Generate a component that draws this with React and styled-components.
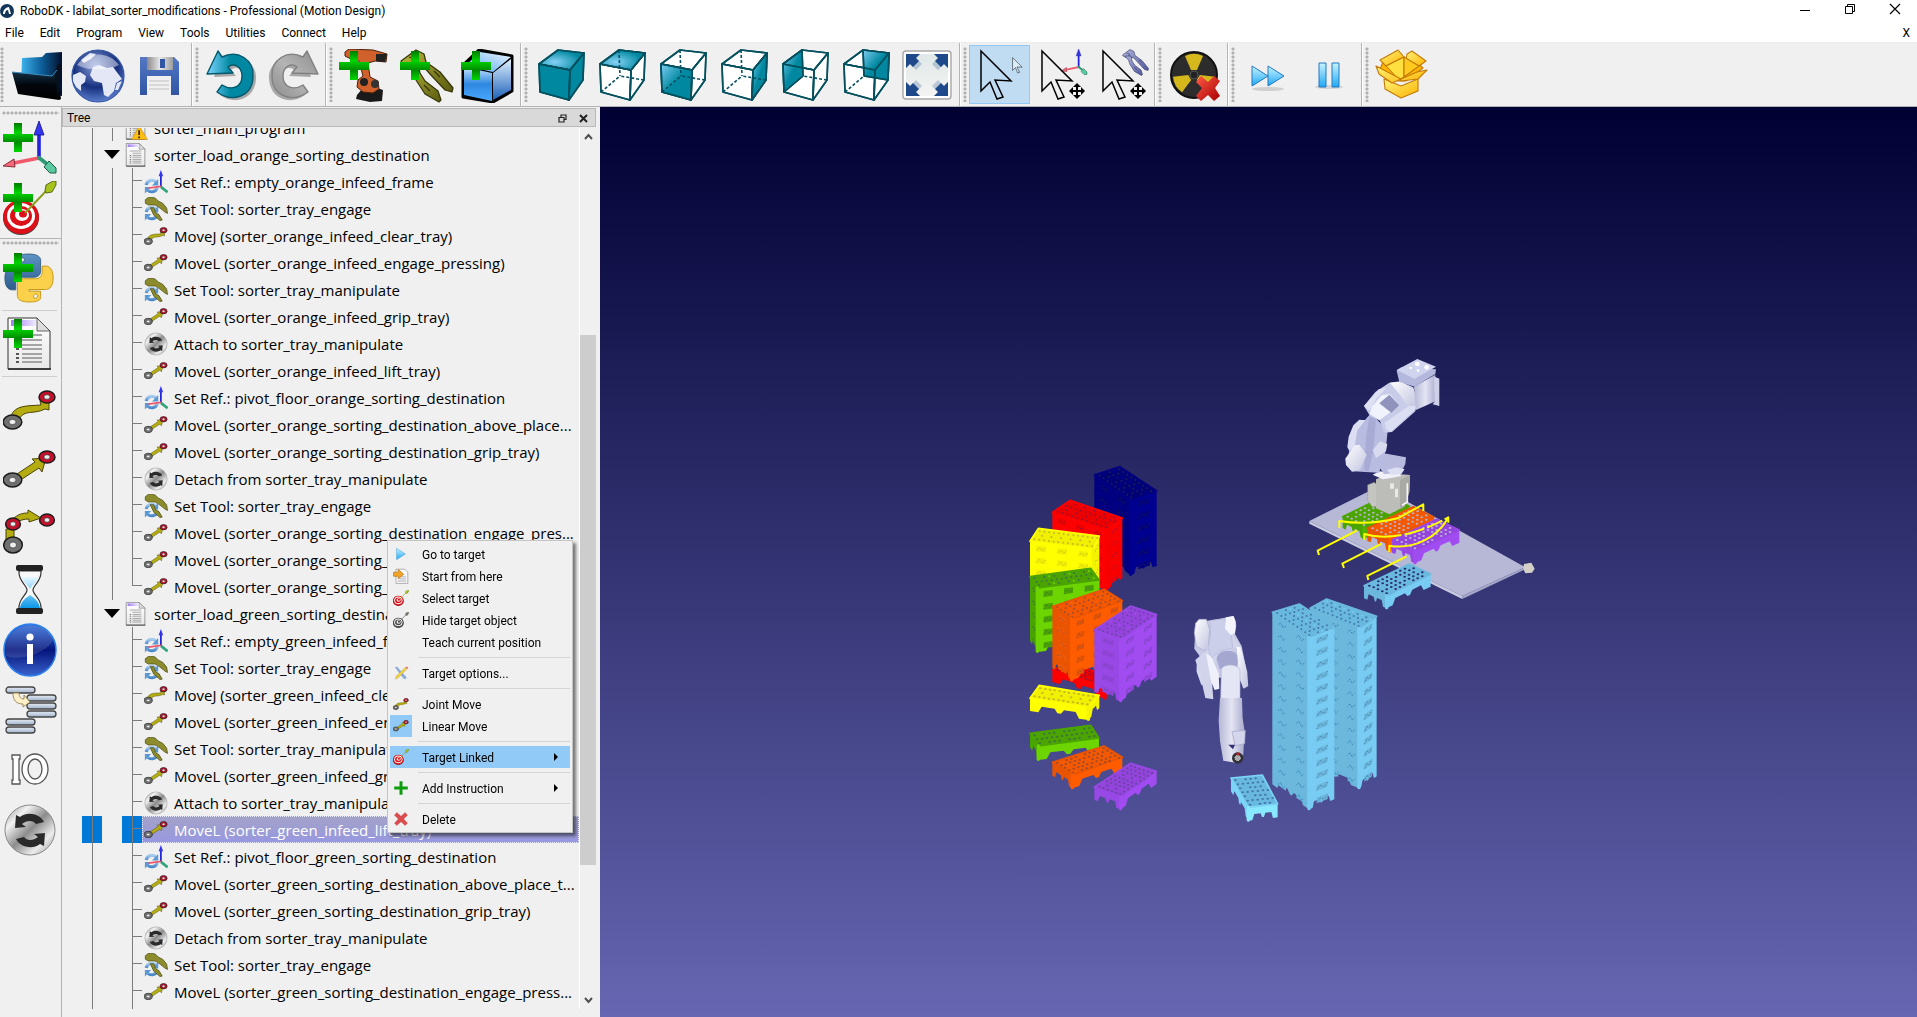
import React from "react";
import styled, { createGlobalStyle, css } from "styled-components";

const GlobalStyle = createGlobalStyle`
  * {
    box-sizing: border-box;
  }

  body {
    margin: 0;
    overflow: hidden;
    font-family: Roboto, "Noto Sans", sans-serif;
    font-size: 12px;
    color: #000;
    background: #f0f0f0;
  }

  button {
    padding: 0;
    border: none;
    background: transparent;
    font: inherit;
    color: inherit;
  }

  ul {
    margin: 0;
    padding: 0;
    list-style: none;
  }

  svg {
    display: block;
    flex-shrink: 0;
  }
`;

/* ---------- shared gradients ---------- */

function Gradients() {
  const linear = (id, stops, dir = [0, 0, 0, 1]) => (
    <linearGradient id={id} x1={dir[0]} y1={dir[1]} x2={dir[2]} y2={dir[3]}>
      {stops.map((s, i) => (
        <stop key={i} offset={i / (stops.length - 1)} stopColor={s} />
      ))}
    </linearGradient>
  );

  return (
    <HiddenDefs aria-hidden="true">
      <defs>
        {linear("plus", ["#007a00", "#00d400", "#008a00", "#00d800"])}
        {linear("folderBack", ["#3fb4ec", "#0d5f9a", "#04102c"], [0, 0, 1, 0])}
        {linear("folderFront", ["#16364c", "#02060c", "#000"])}
        {linear("floppy", ["#5478c4", "#2f55a4"])}
        {linear("silver", ["#8a8a8a", "#e8e8e8", "#9c9c9c"], [0, 0, 1, 0])}
        {linear("undo", ["#7fd6ff", "#0088a2", "#0088a2"], [0, 0, 1, 0])}
        {linear("redo", ["#8d8d8d", "#b4b4b4", "#8d8d8d"], [0, 0, 1, 1])}
        {linear("cubeTop", ["#eef6ff", "#4ca4f4"], [1, 0, 0, 1])}
        {linear("cubeFront", ["#c8e4ff", "#2f88e0", "#4aa8ff"])}
        {linear("cubeSide", ["#dff0ff", "#1c60b8"])}
        {linear("teal", ["#7ecdf2", "#0088a0", "#0088a0"], [0, 0, 1, 1])}
        {linear("blueBtn", ["#c8f4ff", "#1fa8f4"])}
        {linear("gold", ["#fff27a", "#ffb400"], [0, 0, 1, 1])}
        {linear("redX", ["#ff5a48", "#a80000"], [0, 0, 1, 1])}
        {linear("metal", ["#8c8c8c", "#f2f2f2", "#8c8c8c", "#ececec", "#909090"], [0, 0, 1, 1])}
        {linear("info", ["#3470dc", "#04157c", "#3a62cc"])}
        {linear("water", ["#e8f8ff", "#0a98ea"])}
        {linear("paper", ["#ffffff", "#e8e8e8"])}
        {linear("paperHead", ["#a07cf0", "#f0eaff"], [0, 0, 1, 0])}
        {linear("pyBlue", ["#5c94c4", "#2c5c8c"])}
        {linear("slab", ["#e4ecf6", "#a2b2ca"])}
        {linear("grip", ["#b8b83c", "#5a5a10"], [0, 0, 1, 1])}
        {linear("gripBlue", ["#b0b4dc", "#50589c"], [0, 0, 1, 1])}
        {linear("fitBox", ["#dfe8e8", "#f4f4f2"])}
        {linear("reload", ["#a8ccf0", "#4a88c8"])}
        {linear("robotA", ["#ffffff", "#c2c4e0"], [0, 0, 1, 1])}
        {linear("robotB", ["#b6b8d4", "#e4e4f4", "#a8aacb"], [0, 0, 1, 0])}
        <radialGradient id="globe" cx="0.45" cy="0.3" r="0.7">
          <stop offset="0" stopColor="#8fa2dc" />
          <stop offset="0.6" stopColor="#16307e" />
          <stop offset="1" stopColor="#5a7ccc" />
        </radialGradient>
        <radialGradient id="tealGlow" cx="0.35" cy="0.6" r="0.6">
          <stop offset="0" stopColor="#86d2f6" />
          <stop offset="1" stopColor="#0088a0" />
        </radialGradient>
      </defs>
    </HiddenDefs>
  );
}

const HiddenDefs = styled.svg`
  position: absolute;
  width: 0;
  height: 0;
`;

/* ---------- icons, all on a 54 grid ---------- */

function Icon({ size = 54, box = "0 0 54 54", children }) {
  return (
    <svg width={size} height={size} viewBox={box} aria-hidden="true">
      {children}
    </svg>
  );
}

const Plus = () => (
  <path d="M11 2h8v11h11v8H19v10h-8V21H0v-8h11z" fill="url(#plus)" />
);

const Arrows3 = () => (
  <g>
    <path d="M36 38V12" stroke="#2222dd" strokeWidth="3.6" />
    <path d="M36 0l5 14H31z" fill="#3636f0" stroke="#111180" strokeWidth="0.8" />
    <path d="M36 37L11 42" stroke="#f0586c" strokeWidth="3.6" />
    <path d="M0 45l11-7 1 8z" fill="#f4697c" stroke="#80202c" strokeWidth="0.9" />
    <path d="M35 36l9 7" stroke="#2c9a74" strokeWidth="4" />
    <path d="M41 46l5-6 7 7v5l-6 0z" fill="#5ccaa0" stroke="#1c5c44" strokeWidth="1" />
  </g>
);

const Gripper = ({ fill = "url(#grip)", stroke = "#34340a" }) => (
  <g fill={fill} stroke={stroke} strokeWidth="1.2" strokeLinejoin="round">
    <path d="M1 12L16 1l8 4 2 8 14 10 13 16-1 4-7-2-15-16-6-7-8-2-6 2-8-4z" />
    <path d="M6 14l12 0 2 10 5 8 13 10 3 9-2 2-14-8-9-14-3-9z" />
    <path d="M9 8l6 2-2 4M34 22l6 6M24 36l6 6" fill="none" />
  </g>
);

const Donut = ({ x, y, color, rx = 8, ry = 6 }) => (
  <g>
    <ellipse cx={x} cy={y} rx={rx} ry={ry} fill={color} stroke="#1c1c1c" strokeWidth="1.5" />
    <ellipse cx={x} cy={y} rx={rx * 0.38} ry={ry * 0.38} fill="#eee" stroke="#333" strokeWidth="0.7" />
  </g>
);

const grey = "#707070";
const red = "#c4102a";

const MoveJ = () => (
  <g>
    <path
      d="M8 33C12 22 24 23 38 22l-1-4 9-4 0 13-4-1C30 32 22 26 16 36z"
      fill="#b4ac10"
      stroke="#4a4608"
      strokeWidth="1"
    />
    <Donut x={9.5} y={39} color={grey} rx={9.3} ry={7} />
    <Donut x={44} y={14} color={red} />
  </g>
);

const MoveL = () => (
  <g>
    <path
      d="M14 31L32 19l-3-3 14-1-4 14-3-4-17 11z"
      fill="#b4ac10"
      stroke="#4a4608"
      strokeWidth="1"
    />
    <Donut x={9.5} y={37} color={grey} rx={9.3} ry={7} />
    <Donut x={44} y={14} color={red} />
  </g>
);

const MoveC = () => (
  <g>
    <path
      d="M3 40V26h8v14zM10 16c5-5 10-6 15-6l0-3 13 8-12 4 0-3c-5 0-9 1-13 4z"
      fill="#b4ac10"
      stroke="#4a4608"
      strokeWidth="1"
    />
    <Donut x={10} y={42} color={grey} rx={9.3} ry={8} />
    <Donut x={10} y={21} color={red} rx={7.4} />
    <Donut x={44} y={17} color={red} rx={7.4} />
  </g>
);

const Bullseye = ({ color = "#dc1018" }) => (
  <g>
    <ellipse cx="18" cy="37" rx="18" ry="17" fill="#444" />
    <ellipse cx="18" cy="36" rx="18" ry="17" fill={color} />
    <ellipse cx="18" cy="35" rx="14" ry="13" fill="#fff" />
    <ellipse cx="18" cy="35" rx="11" ry="10" fill={color} />
    <ellipse cx="19" cy="34" rx="7" ry="6" fill="#fff" />
    <ellipse cx="20" cy="33" rx="4" ry="3.5" fill={color} />
    <path d="M22 32L45 8" stroke={color === "#dc1018" ? "#8aa01c" : "#555"} strokeWidth="2" />
    <path
      d="M42 10l1-6 7-4h3l0 4-4 7-6 1z"
      fill={color === "#dc1018" ? "#a4c41c" : "#777"}
      stroke="#3c4a08"
      strokeWidth="0.8"
    />
  </g>
);

const Reload = () => (
  <g fill="none" stroke="url(#reload)" strokeWidth="7">
    <path d="M5 34a13 13 0 0 1 22-7" />
    <path d="M30 38a13 13 0 0 1-22 7" />
    <path d="M32 20v15H18zM2 53V38h14z" fill="#5c98d4" stroke="none" />
  </g>
);

const Page = () => (
  <g>
    <path d="M5 1h29l13 13v38H5z" fill="url(#paper)" stroke="#333" strokeWidth="1" />
    <path d="M34 1v13h13z" fill="#ddd" stroke="#444" strokeWidth="0.8" />
    <path d="M8 3h25v6H8z" fill="url(#paperHead)" />
    <path d="M13 18h26M19 23h20M19 28h20M19 32h20M19 37h20M19 41h20M19 45h20" stroke="#8c8c8c" strokeWidth="1.6" />
    <path d="M13 28h3M13 32h3M13 37h3M13 41h3M13 45h3" stroke="#555" strokeWidth="1.8" />
    <path d="M5 52h43" stroke="#222" strokeWidth="1.6" />
  </g>
);

const Sync = () => (
  <g>
    <circle cx="27" cy="27" r="25" fill="url(#metal)" stroke="#8a8a8a" strokeWidth="1" />
    <path d="M13 12l-1 13 11-1-4-3c5-4 11-4 14 0l8-2C37 11 25 8 17 14z" fill="#2a2a2a" />
    <path d="M41 43l1-13-11 1 4 3c-5 4-11 4-14 0l-8 2c4 8 16 11 24 5z" fill="#2a2a2a" />
  </g>
);

const PYTHON_HALF =
  "M14.25.18l.9.2.73.26.59.3.45.32.34.34.25.34.16.33.1.3.04.26.02.2-.01.13V8.5l-.05.63-.13.55-.21.46-.26.38-.3.31-.33.25-.35.19-.35.14-.33.1-.3.07-.26.04-.21.02H8.77l-.69.05-.59.14-.5.22-.41.27-.33.32-.27.35-.2.36-.15.37-.1.35-.07.32-.04.27-.02.21v3.06H3.17l-.21-.03-.28-.07-.32-.12-.35-.18-.36-.26-.36-.36-.35-.46-.32-.59-.28-.73-.21-.88-.14-1.05-.05-1.23.06-1.22.16-1.04.24-.87.32-.71.36-.57.4-.44.42-.33.42-.24.4-.16.36-.1.32-.05.24-.01h.16l.06.01h8.16v-.83H6.18l-.01-2.75-.02-.37.05-.34.11-.31.17-.28.25-.26.31-.23.38-.2.44-.18.51-.15.58-.12.64-.1.71-.06.77-.04.84-.02 1.27.05zm-6.3 1.98l-.23.33-.08.41.08.41.23.34.33.22.41.09.41-.09.33-.22.23-.34.08-.41-.08-.41-.23-.33-.33-.22-.41-.09-.41.09z";

const Python = () => (
  <g transform="translate(2 3) scale(2)">
    <path d={PYTHON_HALF} fill="url(#pyBlue)" stroke="#2c5478" strokeWidth="0.4" />
    <path d={PYTHON_HALF} transform="rotate(180 12 12)" fill="#fbd04a" stroke="#c49a1c" strokeWidth="0.5" />
  </g>
);

const Pointer = ({ fill = "none" }) => (
  <path
    d="M8 2l30 30-16-1 8 17-6 2-7-17-9 9z"
    fill={fill}
    stroke="#000"
    strokeWidth="1.5"
  />
);

const MoveCross = () => (
  <g transform="translate(43 42)">
    <path d="M-6 0H6M0-6V6" stroke="#000" strokeWidth="2" />
    <path d="M0-8l4 4h-8zM0 8l4-4h-8zM-8 0l4 4v-8zM8 0l-4 4v-8z" fill="#000" />
  </g>
);

const TurnArrow = ({ fill, stroke }) => (
  <g>
    <path
      d="M16 11C36 3 52 14 51 30 50 50 30 57 15 46l5-8C30 45 40 41 40 30 40 21 32 16 26 21l5 6-22 1z"
      fill="#8a8a8a"
      opacity="0.7"
    />
    <path
      d="M13 2l4 6C33 0 49 11 48 27 48 48 27 54 12 43l5-7C27 42 37 38 37 27 37 18 29 13 23 18l5 6-26 1z"
      fill={fill}
      stroke={stroke}
      strokeWidth="1.4"
      strokeLinejoin="round"
    />
  </g>
);

const CUBE = {
  A: "5 15",
  B: "24 1",
  C: "50 4",
  D: "36 21",
  E: "6 43",
  F: "35 51",
  G: "49 31",
  H: "25 27",
};

const FACES = {
  top: "ABCD",
  front: "ADFE",
  right: "DCGF",
  left: "ABHE",
  back: "BCGH",
};

const face = (name) => "M" + FACES[name].split("").map((k) => CUBE[k]).join("L") + "z";

function ViewCube({ side }) {
  const hidden = side === "iso" ? [] : ["BH", "EH", "GH"];
  const solid = { left: ["BH", "EH"], back: ["BH", "GH"] }[side] || [];
  const stroke = "#04505e";

  return (
    <g stroke={stroke} strokeWidth="1.6" strokeLinejoin="round">
      {["top", "front", "right"].map((f) => (
        <path key={f} d={face(f)} fill={side === "iso" ? (f === "top" ? "url(#tealGlow)" : "#0088a0") : "#fff"} />
      ))}
      {side !== "iso" && <path d={face(side)} fill={side === "top" ? "url(#tealGlow)" : "url(#teal)"} />}
      {hidden.map((e) => (
        <path
          key={e}
          d={`M${CUBE[e[0]]}L${CUBE[e[1]]}`}
          strokeDasharray={solid.includes(e) ? "none" : "3 2"}
        />
      ))}
      {["top", "front", "right"].map((f) => (
        <path key={f} d={face(f)} fill="none" />
      ))}
    </g>
  );
}

const ICONS = {
  open: (
    <g>
      <path d="M12 9l20-1 4-4 16-1v44L11 41z" fill="url(#folderBack)" />
      <path d="M2 23l40 4 5-6 4 29-2 1L8 45z" fill="url(#folderFront)" />
      <path d="M47 16l5-2-4 36-3-24z" fill="#06101e" />
      <path d="M2 23l40 4 5-6" fill="none" stroke="#3c8cc0" strokeWidth="1" />
    </g>
  ),
  globe: (
    <g>
      <circle cx="27" cy="27" r="26" fill="url(#globe)" stroke="#3456a4" strokeWidth="1.2" />
      <path
        d="M22 18l6-2 8 3 6-1 3 4 6 8-6 4-2 8-6 6-4-2-2-12-8-2-4-6zM2 26l7-3 6 4-1 6-4 3 0 6-5-4-3-6zM10 11l9-7 6 1-5 5-7 4zM46 34l5-2-4 9-3 0z"
        fill="#e4e8f6"
      />
      <path d="M6 16C16 2 38 2 48 16 36 22 18 22 6 16z" fill="#fff" opacity="0.45" />
    </g>
  ),
  save: (
    <g>
      <path d="M8 8h34l5 5v33H8z" fill="url(#floppy)" />
      <path d="M15 8h26v13H15z" fill="url(#silver)" />
      <path d="M28 10h5v9h-5z" fill="#2f55a4" />
      <path d="M15 27h24v19H15z" fill="#f0f0f0" />
      <path d="M17 32h20M17 36h20M17 40h20" stroke="#c0c0c0" />
    </g>
  ),
  undo: <TurnArrow fill="url(#undo)" stroke="#04586c" />,
  redo: (
    <g transform="translate(54 0) scale(-1 1)">
      <TurnArrow fill="url(#redo)" stroke="#808080" />
    </g>
  ),
  robot: (
    <g>
      <path d="M18 46l6-7h14l6 2-1 11-12 1-14-3z" fill="#1a1a1a" />
      <path
        d="M6 3l4-3 24 1 14 4-1 8-11-1-7 2 2 14 8 4 1 8-6 4-10-1-6-5 1-7 5-4-4-15-8-2-6-3z"
        fill="#d0602c"
        stroke="#4c2008"
        strokeWidth="1"
      />
      <path d="M37 5h11l-2 8-9-1z" fill="#222" />
      <circle cx="25" cy="33" r="4" fill="#222" />
      <circle cx="36" cy="35" r="4" fill="#333" />
      <Plus />
    </g>
  ),
  gripper: (
    <g>
      <Gripper />
      <Plus />
    </g>
  ),
  object: (
    <g>
      <path d="M2 16L18 1l33 6v35L32 53 2 48z" fill="#000" stroke="#000" strokeWidth="3" strokeLinejoin="round" />
      <path d="M4 17L19 3l31 5-18 15z" fill="url(#cubeTop)" />
      <path d="M3 18l28 6v28L3 46z" fill="url(#cubeFront)" />
      <path d="M32 24L50 10v31L32 51z" fill="url(#cubeSide)" />
      <Plus />
    </g>
  ),
  iso: <ViewCube side="iso" />,
  top: <ViewCube side="top" />,
  front: <ViewCube side="front" />,
  right: <ViewCube side="right" />,
  left: <ViewCube side="left" />,
  back: <ViewCube side="back" />,
  fit: (
    <g>
      <rect x="3" y="2" width="48" height="48" rx="3" fill="#fff" stroke="#a8a8a8" strokeWidth="1.4" />
      <rect x="6" y="5" width="42" height="42" fill="url(#fitBox)" />
      {[0, 90, 180, 270].map((a) => (
        <g key={a} transform={`rotate(${a} 27 26)`}>
          <path d="M6 5h14l-4 4 6 6-6 6-6-6-4 4z" fill="#1e4a8c" opacity="0.25" />
          <path d="M6 5h14l-4 4 3 3-6 6-3-3-4 4z" fill="#1e4a8c" />
        </g>
      ))}
    </g>
  ),
  select: (
    <g>
      <Pointer />
      <g transform="translate(37 8) scale(0.32)">
        <Pointer fill="#dcecf8" />
      </g>
    </g>
  ),
  moveRef: (
    <g>
      <g transform="translate(27 0) scale(0.49)">
        <Arrows3 />
      </g>
      <Pointer />
      <MoveCross />
    </g>
  ),
  moveTool: (
    <g>
      <Pointer />
      <g transform="translate(27 0) scale(0.5)">
        <Gripper fill="url(#gripBlue)" stroke="#343864" />
      </g>
      <MoveCross />
    </g>
  ),
  collision: (
    <g>
      <circle cx="26" cy="26" r="23" fill="#2c2c2c" stroke="#111" strokeWidth="2" />
      {[0, 120, 240].map((a) => (
        <path key={a} transform={`rotate(${a} 26 26)`} d="M17 7a21 21 0 0 1 18 0L29 21h-6z" fill="#d4b81c" />
      ))}
      <circle cx="26" cy="26" r="4" fill="#222" stroke="#555" />
      <path d="M33 27l7 6 6-6 6 5-5 7 5 8-6 5-6-6-7 6-5-5 6-8-6-6z" fill="url(#redX)" />
    </g>
  ),
  fast: (
    <g>
      <ellipse cx="27" cy="40" rx="16" ry="2" fill="#d0d0d0" />
      <path d="M11 17l16 10-16 10zM27 17l16 10-16 10z" fill="url(#blueBtn)" stroke="#2478c0" strokeWidth="1" />
    </g>
  ),
  pause: (
    <g>
      <ellipse cx="27" cy="38" rx="14" ry="2" fill="#d4d4d4" />
      <path d="M17 14h7v24h-7zM30 14h7v24h-7z" fill="url(#blueBtn)" stroke="#2478c0" strokeWidth="1" />
    </g>
  ),
  box: (
    <g stroke="#c47a08" strokeWidth="1.1" strokeLinejoin="round">
      <path d="M9 30l17 7 17-7v12L26 49 10 40z" fill="url(#gold)" />
      <path d="M8 13l18 17 18-15 4 4-17 13-8 0-18-12z" fill="#ffb400" />
      <path d="M5 11L23 1l6 7L11 17z" fill="url(#gold)" />
      <path d="M32 5l5-3 14 10-7 5-13-7z" fill="url(#gold)" />
      <path d="M11 17l18-9v20l-5 3z" fill="#ffe040" />
      <path d="M29 8l15 9-15 11z" fill="#ffca20" />
      <path d="M1 17l25 13-9 4-13-9zM26 30l16-7 10-2-9 9-17 2z" fill="url(#gold)" />
    </g>
  ),
  addRef: (
    <g>
      <Arrows3 />
      <Plus />
    </g>
  ),
  addTarget: (
    <g>
      <Bullseye />
      <Plus />
    </g>
  ),
  addPython: (
    <g>
      <Python />
      <Plus />
    </g>
  ),
  addProgram: (
    <g>
      <Page />
      <Plus />
    </g>
  ),
  moveJ: <MoveJ />,
  moveL: <MoveL />,
  moveC: <MoveC />,
  wait: (
    <g>
      <path d="M16 8h22c1 10-8 14-8 19s9 9 8 19H16c-1-10 8-14 8-19S15 18 16 8z" fill="#f8f8f8" stroke="#333" strokeWidth="1.2" />
      <path d="M19 14h16c-1 5-6 8-8 12-2-4-7-7-8-12zM17 45c1-7 6-10 10-13 4 3 9 6 10 13z" fill="url(#water)" />
      <rect x="13" y="2" width="27" height="6" rx="2" fill="#222" />
      <rect x="13" y="45" width="27" height="6" rx="2" fill="#222" />
    </g>
  ),
  info: (
    <g>
      <circle cx="27" cy="27" r="26" fill="url(#info)" stroke="#2c80ec" strokeWidth="1.5" />
      <path d="M3 33C14 38 40 32 50 18 46-4 4-4 2 27z" fill="#fff" opacity="0.12" />
      <circle cx="27" cy="14" r="3.6" fill="#fff" />
      <path d="M24 21h6v20h-6z" fill="#fff" />
    </g>
  ),
  call: (
    <g fill="url(#slab)" stroke="#444" strokeWidth="1.3">
      {[
        [3, 4],
        [24, 12],
        [24, 20],
        [24, 28],
        [3, 36],
        [3, 44],
      ].map(([x, y]) => (
        <rect key={x + "-" + y} x={x} y={y} width="29" height="6" rx="3" />
      ))}
      <path d="M10 10h6c0 4 2 6 5 6v-4l6 7-7 5v-3c-7 0-10-4-10-11z" fill="#fff0cc" stroke="#94804c" strokeWidth="0.9" />
    </g>
  ),
  io: (
    <g fill="#fff" stroke="#555" strokeWidth="1.3">
      <path d="M9 12h8v4h-1v21h1v4H9v-4h1V16H9z" />
      <ellipse cx="32" cy="26" rx="13" ry="15" />
      <ellipse cx="32" cy="26" rx="7" ry="10" fill="#f0f0f0" />
    </g>
  ),
  sync: <Sync />,
  program: <Page />,
  programWarn: (
    <g>
      <Page />
      <path d="M34 22l19 31H17z" fill="#fcbc14" stroke="#b07808" />
      <path d="M34 32v11M34 46v4" stroke="#222" strokeWidth="3.6" />
    </g>
  ),
  ref: (
    <g>
      <Reload />
      <path d="M38 38V10" stroke="#2424d8" strokeWidth="4" />
      <path d="M38 0l5 14H33z" fill="#3434f0" />
      <path d="M38 37L10 41" stroke="#f05a6c" strokeWidth="4" />
      <path d="M38 38l15 12" stroke="#34a47c" strokeWidth="6" />
    </g>
  ),
  tool: (
    <g fill="#8c8c2c" stroke="#44440c" strokeWidth="1.5">
      <path d="M3 6l8-6 14 2 7 7 10 5 9 11 2 12-6-3-11-9-11-7-15 0-7-4z" />
      <Reload />
      <path d="M14 24l8 0 4 11 8 5 7 12-5 1-14-12z" />
    </g>
  ),
  go: <path d="M12 8l30 19-30 19z" fill="url(#blueBtn)" stroke="#58a8dc" strokeWidth="2" />,
  start: (
    <g>
      <path d="M10 4h30l10 10v38H10z" fill="#f6f6fa" stroke="#888" strokeWidth="2" />
      <path d="M26 30h18M22 37h22M16 44h28" stroke="#a8a8b4" strokeWidth="3" />
      <path d="M2 14h16V5l18 16-18 16V28H2z" fill="#f4a424" stroke="#a46408" strokeWidth="2" />
    </g>
  ),
  target: <Bullseye />,
  targetHide: <Bullseye color="#4a4a4a" />,
  options: (
    <g>
      <path d="M6 8l8-2 32 36-4 6-6-2z" fill="#8cacd8" />
      <path d="M8 48l3-11L42 8l6 5-30 30z" fill="#f0d048" stroke="#a08824" />
      <path d="M42 8l5-3 5 5-4 3z" fill="#e46474" />
    </g>
  ),
  add: <path d="M22 4h10v18h18v10H32v18H22V32H4V22h18z" fill="#0c9c0c" />,
  remove: <path d="M13 5l14 13L41 5l8 9-13 13 13 14-8 8-14-13-14 13-8-8 13-14L5 14z" fill="#dc4c4c" stroke="#b43434" />,
};

/* ---------- data ---------- */

const MENUS = ["File", "Edit", "Program", "View", "Tools", "Utilities", "Connect", "Help"];

const TOOL_GROUPS = [
  [["open", "Open"], ["globe", "Open online library"], ["save", "Save"]],
  [["undo", "Undo"], ["redo", "Redo"]],
  [["robot", "Add robot"], ["gripper", "Add tool"], ["object", "Add object"]],
  [
    ["iso", "Isometric view"],
    ["top", "Top view"],
    ["front", "Front view"],
    ["right", "Right view"],
    ["left", "Left view"],
    ["back", "Back view"],
    ["fit", "Fit all"],
  ],
  [["select", "Select"], ["moveRef", "Move reference"], ["moveTool", "Move tool"]],
  [["collision", "Check collisions"]],
  [["fast", "Fast simulation"], ["pause", "Pause"]],
  [["box", "Export simulation"]],
];

const TREE = [
  { type: "program", icon: "programWarn", text: "sorter_main_program" },
  { type: "program", icon: "program", text: "sorter_load_orange_sorting_destination", open: true },
  { icon: "ref", text: "Set Ref.: empty_orange_infeed_frame" },
  { icon: "tool", text: "Set Tool: sorter_tray_engage" },
  { icon: "moveJ", text: "MoveJ (sorter_orange_infeed_clear_tray)" },
  { icon: "moveL", text: "MoveL (sorter_orange_infeed_engage_pressing)" },
  { icon: "tool", text: "Set Tool: sorter_tray_manipulate" },
  { icon: "moveL", text: "MoveL (sorter_orange_infeed_grip_tray)" },
  { icon: "sync", text: "Attach to sorter_tray_manipulate" },
  { icon: "moveL", text: "MoveL (sorter_orange_infeed_lift_tray)" },
  { icon: "ref", text: "Set Ref.: pivot_floor_orange_sorting_destination" },
  { icon: "moveL", text: "MoveL (sorter_orange_sorting_destination_above_place..." },
  { icon: "moveL", text: "MoveL (sorter_orange_sorting_destination_grip_tray)" },
  { icon: "sync", text: "Detach from sorter_tray_manipulate" },
  { icon: "tool", text: "Set Tool: sorter_tray_engage" },
  { icon: "moveL", text: "MoveL (sorter_orange_sorting_destination_engage_pres..." },
  { icon: "moveL", text: "MoveL (sorter_orange_sorting_destination_lift)" },
  { icon: "moveL", text: "MoveL (sorter_orange_sorting_destination_clear)", last: true },
  { type: "program", icon: "program", text: "sorter_load_green_sorting_destination", open: true },
  { icon: "ref", text: "Set Ref.: empty_green_infeed_frame" },
  { icon: "tool", text: "Set Tool: sorter_tray_engage" },
  { icon: "moveJ", text: "MoveJ (sorter_green_infeed_clear_tray)" },
  { icon: "moveL", text: "MoveL (sorter_green_infeed_engage_pressing)" },
  { icon: "tool", text: "Set Tool: sorter_tray_manipulate" },
  { icon: "moveL", text: "MoveL (sorter_green_infeed_grip_tray)" },
  { icon: "sync", text: "Attach to sorter_tray_manipulate" },
  { icon: "moveL", text: "MoveL (sorter_green_infeed_lift_tray)", selected: true },
  { icon: "ref", text: "Set Ref.: pivot_floor_green_sorting_destination" },
  { icon: "moveL", text: "MoveL (sorter_green_sorting_destination_above_place_t..." },
  { icon: "moveL", text: "MoveL (sorter_green_sorting_destination_grip_tray)" },
  { icon: "sync", text: "Detach from sorter_tray_manipulate" },
  { icon: "tool", text: "Set Tool: sorter_tray_engage" },
  { icon: "moveL", text: "MoveL (sorter_green_sorting_destination_engage_press..." },
];

const SECOND_PROGRAM = TREE.findIndex((r) => r.text.startsWith("sorter_load_green"));

const CONTEXT_MENU = [
  { icon: "go", text: "Go to target" },
  { icon: "start", text: "Start from here" },
  { icon: "target", text: "Select target" },
  { icon: "targetHide", text: "Hide target object" },
  { text: "Teach current position" },
  null,
  { icon: "options", text: "Target options..." },
  null,
  { icon: "moveJ", text: "Joint Move" },
  { icon: "moveL", text: "Linear Move", checked: true },
  null,
  { icon: "target", text: "Target Linked", active: true, sub: true },
  null,
  { icon: "add", text: "Add Instruction", sub: true },
  null,
  { icon: "remove", text: "Delete" },
];

/* ---------- 3D view ---------- */

// A stack of crates in parallel projection. l, f, r, b are the left, front,
// right and back corners of the top face, h is the height of the stack.
function Stack({ l, f, r, b, h, levels = 1, color, side, dark, hole }) {
  const at = (p, q, t, drop = 0) => [p[0] + (q[0] - p[0]) * t, p[1] + (q[1] - p[1]) * t + drop];
  const pts = (list) => list.map((p) => p.map(Math.round).join(",")).join(" ");
  const length = (p, q) => Math.hypot(q[0] - p[0], q[1] - p[1]);
  const leg = Math.min(18, h / 2);

  const foot = (p, q) => {
    if (length(p, q) < 60) {
      return [at(p, q, 0, h), at(p, q, 0.28, h), at(p, q, 0.4, h - leg), at(p, q, 0.7, h - leg), at(p, q, 0.8, h), at(p, q, 1, h)];
    }
    return [
      at(p, q, 0, h), at(p, q, 0.14, h), at(p, q, 0.2, h - leg), at(p, q, 0.42, h - leg), at(p, q, 0.47, h - 6),
      at(p, q, 0.53, h - 6), at(p, q, 0.58, h - leg), at(p, q, 0.78, h - leg), at(p, q, 0.84, h), at(p, q, 1, h),
    ];
  };

  const windows = (p, q, fill, spark) => {
    if (levels === 1) return null;
    const wide = length(p, q);
    const n = Math.max(1, Math.round(wide / 60));
    const step = h / levels;
    const out = [];
    for (let i = 0; i < levels; i++) {
      for (let j = 0; j < n; j++) {
        const t0 = (j + 0.3) / n;
        const t1 = (j + 0.74) / n;
        const y = i * step + step * 0.3;
        const tall = step * 0.46;
        out.push(
          <g key={i + "-" + j}>
            <polygon points={pts([at(p, q, t0, y), at(p, q, t1, y), at(p, q, t1, y + tall), at(p, q, t0, y + tall)])} fill={fill} />
            <polyline
              points={pts([at(p, q, t0, y + tall - 2), at(p, q, (t0 * 2 + t1) / 3, y + 4), at(p, q, (t0 + t1 * 2) / 3, y + tall - 3), at(p, q, t1, y + 3)])}
              fill="none"
              stroke={spark}
              strokeWidth="3"
              strokeDasharray={i % 2 ? "4 3 2 3" : "2 3 5 3"}
            />
          </g>
        );
      }
    }
    return out;
  };

  const holes = [];
  const n1 = Math.max(3, Math.round(length(l, f) / 15));
  const n2 = Math.max(3, Math.round(length(l, b) / 15));
  for (let i = 0; i < n1; i++) {
    for (let j = 0; j < n2; j++) {
      const u = (i + 0.6) / (n1 + 0.2);
      const v = (j + 0.6) / (n2 + 0.2);
      const x = l[0] + (f[0] - l[0]) * u + (b[0] - l[0]) * v;
      const y = l[1] + (f[1] - l[1]) * u + (b[1] - l[1]) * v;
      const kind = (i * 2 + j * 3 + ((i * j) % 2)) % 4;
      if (kind === 3) continue;
      holes.push(
        <ellipse
          key={i + "-" + j}
          cx={Math.round(x)}
          cy={Math.round(y)}
          rx={levels === 1 ? 4 : 3}
          ry="3"
          fill={kind === 1 && levels > 1 ? color : hole}
        />
      );
    }
  }

  return (
    <g strokeLinejoin="round">
      <polygon points={pts([l, f, ...foot(l, f).reverse()])} fill={side} />
      <polygon points={pts([f, r, ...foot(f, r).reverse()])} fill={color} />
      <polygon points={pts([l, f, r, b])} fill={dark} stroke={side} strokeWidth="5" />
      {windows(l, f, dark, hole)}
      {windows(f, r, side, hole)}
      {holes}
      <path d={`M${f[0]} ${f[1]}V${f[1] + h - 2}`} stroke={color} strokeWidth="10" strokeLinecap="round" />
    </g>
  );
}

const NAVY = { color: "#000090", side: "#000080", dark: "#000078", hole: "#1c1c58" };
const RED = { color: "#f80000", side: "#ff0000", dark: "#ec0000", hole: "#a01030" };
const YELLOW = { color: "#f4f400", side: "#ffff00", dark: "#f0f000", hole: "#c4b828" };
const GREEN = { color: "#6cd400", side: "#4aa400", dark: "#4ca400", hole: "#3c7440" };
const ORANGE = { color: "#ff5c00", side: "#e85400", dark: "#f45800", hole: "#a04c30" };
const PURPLE = { color: "#a04cf0", side: "#9848e4", dark: "#9444dc", hole: "#6c44a8" };
const CYAN = { color: "#78ccf4", side: "#6cb8dc", dark: "#68b8e0", hole: "#4478a4" };

function Scene() {
  return (
    <Canvas viewBox="600 107 1317 910" preserveAspectRatio="xMidYMid slice" role="img" aria-label="Robot cell">
      <g transform="translate(1010 450) scale(0.3333)">
        <Stack l={[253, 75]} f={[362, 150]} r={[440, 123]} b={[330, 50]} h={225} levels={6} {...NAVY} />
        <Stack l={[127, 187]} f={[290, 240]} r={[337, 204]} b={[180, 151]} h={180} levels={5} {...RED} />
        <Stack l={[60, 274]} f={[250, 297]} r={[268, 258]} b={[85, 235]} h={180} levels={5} {...YELLOW} />
        <Stack l={[60, 380]} f={[82, 414]} r={[267, 390]} b={[242, 355]} h={192} levels={5} {...GREEN} />
        <Stack l={[127, 660]} f={[285, 710]} r={[300, 680]} b={[180, 640]} h={36} {...RED} />
        <Stack l={[127, 470]} f={[185, 507]} r={[337, 452]} b={[282, 418]} h={184} levels={5} {...ORANGE} />
        <Stack l={[253, 540]} f={[332, 568]} r={[440, 494]} b={[362, 468]} h={186} levels={5} {...PURPLE} />
        <Stack l={[60, 745]} f={[235, 772]} r={[268, 736]} b={[88, 706]} h={38} {...YELLOW} />
        <Stack l={[60, 850]} f={[85, 888]} r={[267, 864]} b={[242, 826]} h={42} {...GREEN} />
        <Stack l={[127, 937]} f={[187, 975]} r={[337, 922]} b={[282, 888]} h={40} {...ORANGE} />
        <Stack l={[253, 1012]} f={[332, 1040]} r={[440, 964]} b={[362, 940]} h={38} {...PURPLE} />
        <Stack l={[900, 475]} f={[1047, 535]} r={[1100, 499]} b={[950, 447]} h={480} levels={13} {...CYAN} />
        <Stack l={[787, 487]} f={[897, 562]} r={[973, 532]} b={[868, 462]} h={516} levels={14} {...CYAN} />
        <Stack l={[663, 984]} f={[715, 1072]} r={[803, 1062]} b={[757, 975]} h={40} {...CYAN} color="#88e8ff" side="#7cd4f8" />

        <path d="M557 520l22-12 14 4 50-8 28-6 8 28-4 26 20 36 12 60 8 60-16 6-10-40-80 12-20-40-36-50z" fill="#c8cae6" />
        <path d="M557 520l10-12 22 0 10 30-4 60-14 4-22-14-6-40z" fill="url(#robotA)" stroke="#a8a8c8" strokeWidth="2" />
        <path d="M560 645l14 6 18 36 4 14-22 4-14-40z" fill="#d8daf0" />
        <path d="M590 600l30-60 20-36 32-4 6 30-10 28 22 30-66 30-20 50 6 80-24-4-16-70-14-44z" fill="#d2d4ec" />
        <path d="M600 512l44-6 20 48 4 40-40 10-24 20-10-30 8-40z" fill="#cccfea" stroke="#b4b6d6" strokeWidth="2" />
        <path d="M648 502l22-4 7 16-2 34-12 8-18-20z" fill="#f4f4fc" />
        <path d="M620 628c0-34 66-34 66 0l-6 24-50 6z" fill="#a4a8d0" />
        <path d="M680 590l12 2 20 74 2 42-12 8-14-30z" fill="url(#robotA)" />
        <path d="M588 610l16 10 22 50 2 46-14 4-10-24z" fill="#f0f0fa" />
        <path d="M634 660c2-20 50-20 56 0l0 84-58 10z" fill="#e4e6f6" stroke="#b0b2d2" strokeWidth="2" />
        <path d="M630 744l66 0 2 60 6 40-4 70-22 24-38-6-10-60-4-60z" fill="url(#robotB)" />
        <path d="M666 845l40-4-2 40-28 6z" fill="#d4d6ee" stroke="#a0a2c4" strokeWidth="2" />
        <path d="M655 884l20 0-6 14z" fill="#303078" />
        <circle cx="683" cy="924" r="17" fill="#303038" />
        <circle cx="683" cy="924" r="8" fill="#a8a8ac" stroke="#e8e8e8" strokeWidth="3" strokeDasharray="4 4" />
        <path d="M680 908h8v8h-8z" fill="#c02020" />
      </g>

      <g transform="translate(1290 340) scale(0.3333)">
        <path d="M58 543L268 438 706 682 517 768z" fill="#b6b8d6" />
        <path d="M58 543L517 768v9L58 551z" fill="#c8cadf" />
        <path d="M517 768L706 682v6L517 777z" fill="#a4a6c8" />
        <path d="M702 672l22-4 10 18-8 12-20 2-6-14z" fill="#d4d0c8" />
        <Stack l={[158, 530]} f={[222, 563]} r={[358, 499]} b={[290, 466]} h={34} {...GREEN} color="#50b400" hole="#b0b4c8" />
        <Stack l={[232, 565]} f={[300, 597]} r={[432, 532]} b={[370, 500]} h={38} {...ORANGE} hole="#b8b0c8" />
        <Stack l={[306, 600]} f={[375, 632]} r={[508, 570]} b={[440, 538]} h={38} {...PURPLE} hole="#b8b0d8" />
        <Stack l={[222, 737]} f={[290, 767]} r={[422, 702]} b={[358, 672]} h={38} {...CYAN} hole="#2c2c6c" />

        <g fill="none" stroke="#ffff00" strokeWidth="6" strokeLinejoin="round">
          <path d="M148 563v-20c60 10 110 8 175-8l77-42v20" />
          <path d="M223 600v-18c60 18 150 8 252-50v16" strokeDasharray="130 10 1 0 60 10 50 8" />
          <path d="M298 637v-20c70 12 140-20 177-84" />
          <path d="M200 572L83 632l4 13M275 611l-118 60 5 13M350 649l-118 59 3 12" />
        </g>

        <path d="M233 435l20-8 20 20 4 50-30 4-14-20z" fill="#c4c4c0" stroke="#8c8c90" strokeWidth="2" strokeDasharray="4 3" />
        <path d="M258 418l42-18 60 5-2 50-14 44-46 24-40-18z" fill="#bcbcb8" />
        <path d="M330 420l30-14-2 50-14 44-14 8z" fill="#a8a8a4" />
        <path d="M300 430h12v16h-12zM315 446h9v26h-9z" fill="#e8e8e8" />
        <path d="M352 430l0 56-16 10" fill="none" stroke="#f4f4f4" strokeWidth="5" />
        <path d="M248 404l20-10 60 6 6 8-30 6-26 4z" fill="#f0f0f8" />

        <path d="M282 340l66 12-2 20-14 28-50 2-14-20z" fill="#b8bade" />
        <path d="M290 390l30-8 24 6-10 14-30 2z" fill="#dcdef2" />
        <path d="M207 240l18 0 18-20 50 52-6 60-20 66-80-4-12-40 6-60z" fill="#b8bce0" />
        <path d="M176 290l14-34 18-17 18 2-24 30-8 50-16 12-6-12z" fill="#dcdef4" />
        <path d="M228 290l10-60 20 4-8 100-14 60-14-4z" fill="#a8acd4" />
        <path d="M166 356l28-40 14-2 22 30-20 46-24 5-18-20z" fill="url(#robotA)" />
        <path d="M248 330l22-26 22 8-4 22-30 20z" fill="#d8daf0" />
        <path d="M222 198l34-42 42-28 32-4 40 18 12 40-6 32-70 62-24 2-12-36-30-14z" fill="#c8cce8" />
        <path d="M300 128l34-3 36 22 10 36-26 18-22-34z" fill="url(#robotA)" />
        <path d="M245 200l30-34 24-4 30 34-60 44-30-18z" fill="#f0f2fc" />
        <path d="M268 190l30-26 30 32-24 22z" fill="#9094bc" />
        <path d="M222 198l44-50 24-4-30 30-22 38z" fill="#dee0f4" />
        <path d="M284 248l72-50 18 0 4 8-76 70-14-8z" fill="#dcdff4" />
        <path d="M372 140l64-36 4 78-62 28z" fill="url(#robotB)" />
        <path d="M432 118l2-8 14 6v82l-20-5 6-8z" fill="#ced0e8" />
        <path d="M320 92l14-10 104 6-2 14-62 38-46-14z" fill="#b4b8dc" />
        <path d="M320 90l62-33 56 23-64 36z" fill="#d0d4ee" />
        <g fill="#fff">
          <circle cx="382" cy="72" r="7" />
          <circle cx="362" cy="84" r="4" />
          <circle cx="410" cy="82" r="7" />
          <circle cx="384" cy="92" r="4" />
        </g>
      </g>
    </Canvas>
  );
}

/* ---------- app ---------- */

export default function App() {
  return (
    <Window>
      <GlobalStyle />
      <Gradients />

      <TitleBar>
        <Icon size={14} box="0 0 14 14">
          <circle cx="7" cy="7" r="7" fill="#12365a" />
          <path d="M3 10c0-4 3-7 6-7l2 7-2 0-1-4c-2 0-3 2-3 4z" fill="#fff" />
        </Icon>
        <Title>RoboDK - labilat_sorter_modifications - Professional (Motion Design)</Title>
        <WindowButton aria-label="Minimize">
          <Icon size={12} box="0 0 12 12">
            <path d="M1 7.500h10" stroke="#000" />
          </Icon>
        </WindowButton>
        <WindowButton aria-label="Restore">
          <Icon size={12} box="0 0 12 12">
            <path d="M1.500 3.500h7v7h-7zM3.500 3.500v-2h7v7h-2" fill="none" stroke="#000" />
          </Icon>
        </WindowButton>
        <WindowButton aria-label="Close">
          <Icon size={12} box="0 0 12 12">
            <path d="M1 1l10 10M11 1L1 11" stroke="#000" strokeWidth="1.200" />
          </Icon>
        </WindowButton>
      </TitleBar>

      <MenuBar>
        {MENUS.map((m) => (
          <MenuTitle key={m}>{m}</MenuTitle>
        ))}
        <CloseDocument aria-label="Close station">X</CloseDocument>
      </MenuBar>

      <TopTools>
        {TOOL_GROUPS.map((group, i) => (
          <ToolGroup key={i} $first={i === 0} $last={i === TOOL_GROUPS.length - 1}>
            {group.map(([name, label]) => (
              <ToolButton key={name} aria-label={label} $active={name === "select"}>
                <Icon>{ICONS[name]}</Icon>
              </ToolButton>
            ))}
          </ToolGroup>
        ))}
      </TopTools>

      <Body>
        <SideTools>
          <Grip />
          <SideButton icon="addRef" label="Add reference frame" />
          <SideButton icon="addTarget" label="Add target" />
          <SideRule $full />
          <Grip />
          <SideButton icon="addPython" label="Add Python program" />
          <SideRule />
          <SideButton icon="addProgram" label="Add program" />
          <SideRule />
          <SideButton icon="moveJ" label="Move joint" />
          <SideButton icon="moveL" label="Move linear" />
          <SideButton icon="moveC" label="Move circular" />
          <SideButton icon="wait" label="Pause instruction" />
          <SideButton icon="info" label="Show message" />
          <SideButton icon="call" label="Program call" />
          <SideButton icon="io" label="Set or wait I/O" />
          <SideButton icon="sync" label="Simulation event" />
        </SideTools>

        <Dock>
          <DockTitle>
            <DockName>Tree</DockName>
            <DockButton aria-label="Float panel">
              <Icon size={9} box="0 0 9 9">
                <path d="M1 3.500h5v4.500H1zM3 3.500V1h5v4.500H6" fill="none" stroke="#222" strokeWidth="1.200" />
              </Icon>
            </DockButton>
            <DockButton aria-label="Close panel">
              <Icon size={9} box="0 0 9 9">
                <path d="M1 1l7 7M8 1L1 8" stroke="#222" strokeWidth="2" />
              </Icon>
            </DockButton>
          </DockTitle>
          <TreeArea>
            <TreeList>
              {TREE.map((row, i) => (
                <TreeRow key={i} row={row} inFirst={i < SECOND_PROGRAM} />
              ))}
              <Row>
                <Guide $line />
                <Guide />
                <Guide $line />
              </Row>
            </TreeList>
            <ScrollBar>
              <ScrollButton aria-label="Scroll up">
                <Icon size={9} box="0 0 9 9">
                  <path d="M1 7l3.500-4L8 7" fill="none" stroke="#505050" strokeWidth="2" />
                </Icon>
              </ScrollButton>
              <ScrollTrack>
                <ScrollThumb />
              </ScrollTrack>
              <ScrollButton aria-label="Scroll down">
                <Icon size={9} box="0 0 9 9">
                  <path d="M1 2l3.500 4L8 2" fill="none" stroke="#505050" strokeWidth="2" />
                </Icon>
              </ScrollButton>
            </ScrollBar>
          </TreeArea>
        </Dock>

        <View>
          <Scene />
        </View>
      </Body>

      <ContextMenu role="menu">
        {CONTEXT_MENU.map((item, i) =>
          item ? (
            <ContextItem key={i} role="menuitem" $active={item.active}>
              <ContextIcon $checked={item.checked}>
                {item.icon && <Icon size={16}>{ICONS[item.icon]}</Icon>}
              </ContextIcon>
              <ContextText>{item.text}</ContextText>
              {item.sub && (
                <Icon size={8} box="0 0 8 8">
                  <path d="M2 0l4 4-4 4z" fill="#000" />
                </Icon>
              )}
            </ContextItem>
          ) : (
            <ContextRule key={i} />
          )
        )}
      </ContextMenu>
    </Window>
  );
}

function SideButton({ icon, label }) {
  return (
    <SideToolButton aria-label={label}>
      <Icon>{ICONS[icon]}</Icon>
    </SideToolButton>
  );
}

function TreeRow({ row, inFirst }) {
  if (row.type === "program") {
    return (
      <Row>
        <Guide $line />
        {row.open ? (
          <Guide>
            <Expander aria-label="Collapse">
              <Icon size={16} box="0 0 16 16">
                <path d="M0 3h16L8 12z" fill="#000" />
              </Icon>
            </Expander>
          </Guide>
        ) : (
          <Guide $line />
        )}
        <RowContent>
          <Icon size={24}>{ICONS[row.icon]}</Icon>
          <RowText>{row.text}</RowText>
        </RowContent>
      </Row>
    );
  }

  return (
    <Row>
      <Guide $line $selected={row.selected} />
      <Guide $line={inFirst} />
      <Guide $line $tick $end={row.last} $selected={row.selected} />
      <RowContent $selected={row.selected}>
        <Icon size={24}>{ICONS[row.icon]}</Icon>
        <RowText>{row.text}</RowText>
      </RowContent>
    </Row>
  );
}

const Window = styled.div`
  display: flex;
  flex-direction: column;
  height: 100vh;
  background: #f0f0f0;
`;

const TitleBar = styled.header`
  display: flex;
  flex-shrink: 0;
  height: 22px;
  background: #fff;
  align-items: center;
`;

const Title = styled.h1`
  flex: 1;
  margin: 0 0 0 6px;
  font-size: 12px;
  line-height: 16px;
  font-weight: 400;
`;

const WindowButton = styled.button`
  display: flex;
  align-items: center;
  justify-content: center;
  width: 45px;
  height: 18px;
  align-self: flex-start;
`;

const MenuBar = styled.nav`
  display: flex;
  flex-shrink: 0;
  height: 21px;
  align-items: center;
  gap: 16px;
  padding: 2px 7px 0 5px;
  background: #fff;
  border-bottom: 1px solid #ececec;
`;

const MenuTitle = styled.button`
  line-height: 18px;
`;

const CloseDocument = styled.button`
  margin-left: auto;
  line-height: 18px;
`;

const TopTools = styled.div`
  display: flex;
  flex-shrink: 0;
  height: 64px;
  border-bottom: 1px solid #b4b4b4;
`;

const dots = css`
  background-image: radial-gradient(circle at 2px 2px, #b0b0b0 1px, transparent 2px);
  background-size: 4px 4px;
`;

const ToolGroup = styled.div`
  display: flex;
  align-items: center;
  position: relative;
  padding: 0 2px 0 ${(props) => (props.$first ? "6px" : "8px")};
  border-right: ${(props) => (props.$last ? "none" : "1px solid #b4b4b4")};
  box-shadow: ${(props) => (props.$last ? "none" : "1px 0 0 #fff")};
  margin-right: 1px;

  &::before {
    content: "";
    position: absolute;
    left: ${(props) => (props.$first ? "0" : "2px")};
    top: 4px;
    bottom: 4px;
    width: 4px;
    ${dots}
  }
`;

const ToolButton = styled.button`
  display: flex;
  align-items: center;
  justify-content: center;
  width: 61px;
  height: 59px;
  padding-top: 2px;
  border: 1px solid ${(props) => (props.$active ? "#90c8f6" : "transparent")};
  background: ${(props) => (props.$active ? "#c0dcf3" : "transparent")};
`;

const Body = styled.div`
  display: flex;
  flex: 1;
  min-height: 0;
`;

const SideTools = styled.div`
  display: flex;
  flex-direction: column;
  flex-shrink: 0;
  width: 62px;
  padding-top: 2px;
  border-right: 1px solid #b4b4b4;
  background: #f0f0f0;
`;

const Grip = styled.div`
  height: 4px;
  flex-shrink: 0;
  margin: 2px 2px 3px;
  ${dots}
`;

const SideToolButton = styled.button`
  display: flex;
  align-items: center;
  justify-content: center;
  width: 60px;
  height: 60px;
  flex-shrink: 0;
`;

const SideRule = styled.div`
  height: 1px;
  flex-shrink: 0;
  margin: ${(props) => (props.$full ? "0" : "2px 4px 3px 2px")};
  background: ${(props) => (props.$full ? "#b4b4b4" : "#cfcfcf")};
`;

const Dock = styled.aside`
  display: flex;
  flex-direction: column;
  flex-shrink: 0;
  width: 538px;
  padding: 1px 4px 8px 0;
`;

const DockTitle = styled.div`
  display: flex;
  align-items: center;
  gap: 6px;
  height: 19px;
  flex-shrink: 0;
  padding: 1px 4px 0;
  background: #d9d9d9;
  border: 1px solid #b9b9b9;
`;

const DockName = styled.span`
  flex: 1;
  line-height: 16px;
`;

const DockButton = styled.button`
  display: flex;
  align-items: center;
  justify-content: center;
  width: 15px;
  height: 15px;
`;

const TreeArea = styled.div`
  display: flex;
  flex: 1;
  min-height: 0;
  overflow: hidden;
  padding-top: 1px;
`;

const TreeList = styled.ul`
  flex: 1;
  min-width: 0;
  min-height: 0;
  overflow: hidden;
  padding-left: 20px;
  font-family: "Open Sans", "Noto Sans", sans-serif;
  font-size: 15px;

  & > li:first-child {
    margin-top: -14px;
  }
`;

const Row = styled.li`
  display: flex;
  height: 27px;
`;

const Guide = styled.span`
  flex-shrink: 0;
  width: 20px;
  background-color: ${(props) => (props.$selected ? "#0078d7" : "transparent")};
  background-image: linear-gradient(
      ${(props) => (props.$line ? "#7c7c7c, #7c7c7c" : "transparent, transparent")}
    ),
    linear-gradient(
      ${(props) => (props.$tick ? "#7c7c7c, #7c7c7c" : "transparent, transparent")}
    );
  background-position: 10px 0, 10px 12px;
  background-size: 1px ${(props) => (props.$end ? "13px" : "100%")}, 10px 1px;
  background-repeat: no-repeat;
`;

const Expander = styled.button`
  display: flex;
  align-items: center;
  justify-content: center;
  width: 20px;
  height: 27px;
`;

const RowContent = styled.div`
  display: flex;
  flex: 1;
  align-items: center;
  gap: 6px;
  min-width: 0;
  overflow: hidden;
  padding-left: ${(props) => (props.$selected ? "1px" : "2px")};
  color: ${(props) => (props.$selected ? "#fff" : "#000")};
  border: ${(props) => (props.$selected ? "1px dotted #e8e8ff" : "none")};
  background: ${(props) =>
    props.$selected ? "linear-gradient(#a2a2c8, #9898e0)" : "transparent"};
`;

const RowText = styled.span`
  padding-top: 2px;
  line-height: 23px;
  white-space: nowrap;
`;

const ScrollBar = styled.div`
  display: flex;
  flex-direction: column;
  width: 17px;
  border-left: 1px solid #fff;
`;

const ScrollButton = styled.button`
  display: flex;
  align-items: center;
  justify-content: center;
  height: 17px;
`;

const ScrollTrack = styled.div`
  display: flex;
  flex: 1;
  flex-direction: column;

  &::before {
    content: "";
    flex: 190;
  }

  &::after {
    content: "";
    flex: 127;
  }
`;

const ScrollThumb = styled.div`
  flex: 530;
  background: #cdcdcd;
`;

const View = styled.main`
  flex: 1;
  min-width: 0;
  overflow: hidden;
  background: linear-gradient(#000033, #6666b2);
`;

const Canvas = styled.svg`
  width: 100%;
  height: 100%;
`;

const ContextMenu = styled.div`
  position: fixed;
  left: 387px;
  top: 540px;
  width: 186px;
  padding: 2px;
  border: 1px solid #c4c4c4;
  background: #f0f0f0;
  box-shadow: 3px 3px 3px rgba(0, 0, 0, 0.5);
`;

const ContextItem = styled.button`
  display: flex;
  align-items: center;
  width: 100%;
  height: 22px;
  padding-right: 10px;
  text-align: left;
  background: ${(props) => (props.$active ? "#91c9f7" : "transparent")};
`;

const ContextIcon = styled.span`
  display: flex;
  align-items: center;
  justify-content: center;
  width: 22px;
  height: 22px;
  background: ${(props) => (props.$checked ? "#91c9f7" : "transparent")};
`;

const ContextText = styled.span`
  flex: 1;
  padding: 2px 0 0 10px;
  line-height: 20px;
  white-space: nowrap;
`;

const ContextRule = styled.div`
  height: 1px;
  margin: 4px 0 4px 28px;
  background: #d4d4d4;
`;
